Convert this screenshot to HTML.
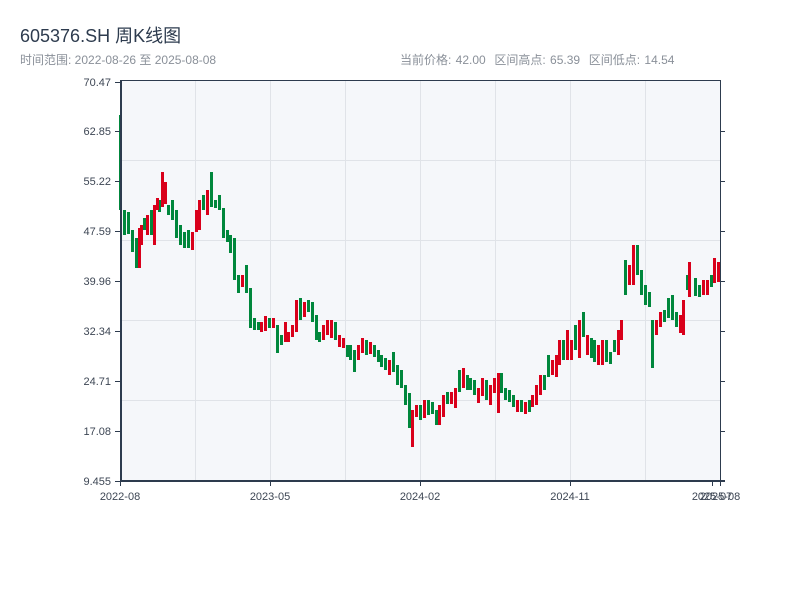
<!DOCTYPE html>
<html><head><meta charset="utf-8"><style>
body{margin:0;width:800px;height:600px;background:#fff;font-family:"Liberation Sans","Noto Sans CJK SC",sans-serif;overflow:hidden;position:relative}
.t{position:absolute;left:20px;top:22px;font-size:18px;color:#2d3b4e}
.s{position:absolute;left:20px;top:51px;font-size:12px;color:#8a9099}
.r{position:absolute;left:400px;top:51px;font-size:12px;color:#8a9099;word-spacing:1px}
svg{position:absolute;left:0;top:0}
.G{fill:#00873c}.R{fill:#d9001b}
</style></head><body>
<div class="t">605376.SH 周K线图</div>
<div class="s">时间范围: 2022-08-26 至 2025-08-08</div>
<div class="r">当前价格: 42.00&nbsp; 区间高点: 65.39&nbsp; 区间低点: 14.54</div>
<svg width="800" height="600" xmlns="http://www.w3.org/2000/svg">
<rect x="120" y="80" width="600" height="401" fill="#f5f7fa"/>
<g stroke="#e0e3e8" stroke-width="1">
<line x1="195.5" y1="80" x2="195.5" y2="481"/><line x1="270.5" y1="80" x2="270.5" y2="481"/><line x1="345.5" y1="80" x2="345.5" y2="481"/><line x1="420.5" y1="80" x2="420.5" y2="481"/><line x1="495.5" y1="80" x2="495.5" y2="481"/><line x1="570.5" y1="80" x2="570.5" y2="481"/><line x1="645.5" y1="80" x2="645.5" y2="481"/>
<line x1="120" y1="160.5" x2="720" y2="160.5"/><line x1="120" y1="240.5" x2="720" y2="240.5"/><line x1="120" y1="320.5" x2="720" y2="320.5"/><line x1="120" y1="400.5" x2="720" y2="400.5"/>
</g>
<g class="G">
<rect x="119" y="115" width="3" height="95"/>
<rect x="123" y="210" width="3" height="25"/><rect x="127" y="212" width="3" height="22"/>
<rect x="131" y="230" width="3" height="22"/><rect x="135" y="238" width="3" height="30"/>
<rect x="143" y="218" width="3" height="12"/><rect x="150" y="210" width="3" height="25"/>
<rect x="158" y="200" width="3" height="12"/><rect x="167" y="205" width="3" height="10"/>
<rect x="171" y="200" width="3" height="20"/><rect x="175" y="210" width="3" height="28"/>
<rect x="179" y="225" width="3" height="20"/><rect x="183" y="232" width="3" height="16"/>
<rect x="187" y="230" width="3" height="18"/><rect x="202" y="195" width="3" height="15"/>
<rect x="210" y="172" width="3" height="35"/><rect x="214" y="200" width="3" height="8"/>
<rect x="218" y="195" width="3" height="15"/><rect x="222" y="208" width="3" height="30"/>
<rect x="226" y="230" width="3" height="12"/><rect x="229" y="235" width="3" height="18"/>
<rect x="233" y="238" width="3" height="42"/><rect x="237" y="275" width="3" height="18"/>
<rect x="245" y="265" width="3" height="28"/><rect x="249" y="288" width="3" height="40"/>
<rect x="253" y="318" width="3" height="12"/><rect x="257" y="322" width="3" height="8"/>
<rect x="268" y="318" width="3" height="10"/><rect x="276" y="325" width="3" height="28"/>
<rect x="280" y="335" width="3" height="10"/><rect x="299" y="298" width="3" height="22"/>
<rect x="307" y="300" width="3" height="12"/><rect x="311" y="302" width="3" height="20"/>
<rect x="315" y="315" width="3" height="25"/><rect x="318" y="332" width="3" height="10"/>
<rect x="334" y="322" width="3" height="18"/><rect x="346" y="345" width="3" height="12"/>
<rect x="349" y="345" width="3" height="15"/><rect x="353" y="350" width="3" height="22"/>
<rect x="365" y="340" width="3" height="15"/><rect x="373" y="345" width="3" height="12"/>
<rect x="377" y="350" width="3" height="12"/><rect x="380" y="355" width="3" height="12"/>
<rect x="384" y="358" width="3" height="12"/><rect x="392" y="352" width="3" height="20"/>
<rect x="396" y="365" width="3" height="20"/><rect x="400" y="370" width="3" height="18"/>
<rect x="404" y="385" width="3" height="20"/><rect x="408" y="393" width="3" height="35"/>
<rect x="419" y="405" width="3" height="15"/><rect x="427" y="400" width="3" height="15"/>
<rect x="431" y="402" width="3" height="12"/><rect x="435" y="410" width="3" height="15"/>
<rect x="446" y="392" width="3" height="12"/><rect x="458" y="370" width="3" height="22"/>
<rect x="466" y="375" width="3" height="15"/><rect x="469" y="378" width="3" height="12"/>
<rect x="473" y="380" width="3" height="15"/><rect x="485" y="380" width="3" height="20"/>
<rect x="500" y="373" width="3" height="20"/><rect x="504" y="388" width="3" height="12"/>
<rect x="508" y="390" width="3" height="12"/><rect x="512" y="395" width="3" height="12"/>
<rect x="520" y="400" width="3" height="12"/><rect x="528" y="400" width="3" height="12"/>
<rect x="543" y="375" width="3" height="15"/><rect x="547" y="355" width="3" height="22"/>
<rect x="562" y="340" width="3" height="20"/><rect x="574" y="325" width="3" height="25"/>
<rect x="582" y="312" width="3" height="25"/><rect x="590" y="338" width="3" height="20"/>
<rect x="593" y="340" width="3" height="22"/><rect x="605" y="340" width="3" height="22"/>
<rect x="609" y="352" width="3" height="12"/><rect x="613" y="340" width="3" height="12"/>
<rect x="624" y="260" width="3" height="35"/><rect x="636" y="245" width="3" height="30"/>
<rect x="640" y="270" width="3" height="25"/><rect x="644" y="285" width="3" height="20"/>
<rect x="648" y="292" width="3" height="15"/><rect x="651" y="320" width="3" height="48"/>
<rect x="663" y="310" width="3" height="12"/><rect x="667" y="298" width="3" height="20"/>
<rect x="671" y="295" width="3" height="25"/><rect x="675" y="312" width="3" height="15"/>
<rect x="686" y="275" width="3" height="15"/><rect x="694" y="278" width="3" height="18"/>
<rect x="698" y="285" width="3" height="12"/><rect x="710" y="275" width="3" height="12"/>
</g>
<g class="R">
<rect x="138" y="228" width="3" height="40"/><rect x="140" y="225" width="3" height="20"/>
<rect x="146" y="215" width="3" height="20"/><rect x="153" y="205" width="3" height="40"/>
<rect x="156" y="198" width="3" height="12"/><rect x="161" y="172" width="3" height="35"/>
<rect x="164" y="182" width="3" height="22"/><rect x="191" y="232" width="3" height="18"/>
<rect x="195" y="210" width="3" height="22"/><rect x="198" y="200" width="3" height="30"/>
<rect x="206" y="190" width="3" height="25"/><rect x="241" y="275" width="3" height="12"/>
<rect x="260" y="322" width="3" height="10"/><rect x="264" y="316" width="3" height="15"/>
<rect x="272" y="318" width="3" height="10"/><rect x="284" y="322" width="3" height="20"/>
<rect x="287" y="332" width="3" height="10"/><rect x="291" y="325" width="3" height="12"/>
<rect x="295" y="300" width="3" height="32"/><rect x="303" y="302" width="3" height="15"/>
<rect x="322" y="325" width="3" height="15"/><rect x="326" y="320" width="3" height="15"/>
<rect x="330" y="320" width="3" height="18"/><rect x="338" y="335" width="3" height="12"/>
<rect x="342" y="338" width="3" height="10"/><rect x="357" y="345" width="3" height="15"/>
<rect x="361" y="338" width="3" height="15"/><rect x="369" y="342" width="3" height="12"/>
<rect x="388" y="360" width="3" height="15"/><rect x="411" y="410" width="3" height="37"/>
<rect x="415" y="405" width="3" height="12"/><rect x="423" y="400" width="3" height="18"/>
<rect x="438" y="405" width="3" height="20"/><rect x="442" y="395" width="3" height="22"/>
<rect x="450" y="392" width="3" height="12"/><rect x="454" y="388" width="3" height="20"/>
<rect x="462" y="368" width="3" height="20"/><rect x="477" y="388" width="3" height="15"/>
<rect x="481" y="378" width="3" height="18"/><rect x="489" y="385" width="3" height="20"/>
<rect x="493" y="378" width="3" height="15"/><rect x="497" y="373" width="3" height="40"/>
<rect x="516" y="400" width="3" height="12"/><rect x="524" y="402" width="3" height="12"/>
<rect x="531" y="395" width="3" height="12"/><rect x="535" y="385" width="3" height="20"/>
<rect x="539" y="375" width="3" height="20"/><rect x="551" y="360" width="3" height="15"/>
<rect x="555" y="355" width="3" height="22"/><rect x="558" y="340" width="3" height="25"/>
<rect x="566" y="330" width="3" height="30"/><rect x="570" y="340" width="3" height="20"/>
<rect x="578" y="320" width="3" height="38"/><rect x="586" y="335" width="3" height="20"/>
<rect x="597" y="345" width="3" height="20"/><rect x="601" y="340" width="3" height="25"/>
<rect x="617" y="330" width="3" height="25"/><rect x="620" y="320" width="3" height="20"/>
<rect x="628" y="265" width="3" height="20"/><rect x="632" y="245" width="3" height="40"/>
<rect x="655" y="320" width="3" height="15"/><rect x="659" y="312" width="3" height="15"/>
<rect x="679" y="315" width="3" height="18"/><rect x="682" y="300" width="3" height="35"/>
<rect x="688" y="262" width="3" height="35"/><rect x="702" y="280" width="3" height="15"/>
<rect x="706" y="280" width="3" height="15"/><rect x="713" y="258" width="3" height="25"/>
<rect x="717" y="262" width="3" height="20"/>
</g>
<g stroke="#2d3b4e">
<line x1="120" y1="80.5" x2="720" y2="80.5" stroke-width="1"/>
<line x1="720.5" y1="80" x2="720.5" y2="481" stroke-width="1"/>
<line x1="121" y1="80" x2="121" y2="482" stroke-width="2"/>
<line x1="120" y1="481" x2="725" y2="481" stroke-width="2"/>
<g stroke-width="1">
<line x1="115" y1="82.5" x2="120" y2="82.5"/><line x1="115" y1="131.5" x2="120" y2="131.5"/><line x1="115" y1="181.5" x2="120" y2="181.5"/><line x1="115" y1="231.5" x2="120" y2="231.5"/><line x1="115" y1="281.5" x2="120" y2="281.5"/><line x1="115" y1="331.5" x2="120" y2="331.5"/><line x1="115" y1="381.5" x2="120" y2="381.5"/><line x1="115" y1="431.5" x2="120" y2="431.5"/><line x1="115" y1="481.5" x2="120" y2="481.5"/>
<line x1="720" y1="131.5" x2="725" y2="131.5"/><line x1="720" y1="181.5" x2="725" y2="181.5"/><line x1="720" y1="231.5" x2="725" y2="231.5"/><line x1="720" y1="281.5" x2="725" y2="281.5"/><line x1="720" y1="331.5" x2="725" y2="331.5"/><line x1="720" y1="381.5" x2="725" y2="381.5"/><line x1="720" y1="431.5" x2="725" y2="431.5"/>
<line x1="120.5" y1="481" x2="120.5" y2="486"/><line x1="270.5" y1="481" x2="270.5" y2="486"/><line x1="420.5" y1="481" x2="420.5" y2="486"/><line x1="570.5" y1="481" x2="570.5" y2="486"/><line x1="712.5" y1="481" x2="712.5" y2="486"/><line x1="720.5" y1="481" x2="720.5" y2="486"/>
</g></g>
<g font-size="11" fill="#3d4654" text-anchor="end">
<text x="111" y="86">70.47</text><text x="111" y="135">62.85</text><text x="111" y="185">55.22</text><text x="111" y="235">47.59</text><text x="111" y="285">39.96</text><text x="111" y="335">32.34</text><text x="111" y="385">24.71</text><text x="111" y="435">17.08</text><text x="111" y="485">9.455</text>
</g>
<g font-size="11" fill="#3d4654" text-anchor="middle">
<text x="120" y="500">2022-08</text><text x="270" y="500">2023-05</text><text x="420" y="500">2024-02</text><text x="570" y="500">2024-11</text><text x="712" y="500">2025-07</text><text x="720" y="500">2025-08</text>
</g>
</svg>
</body></html>
